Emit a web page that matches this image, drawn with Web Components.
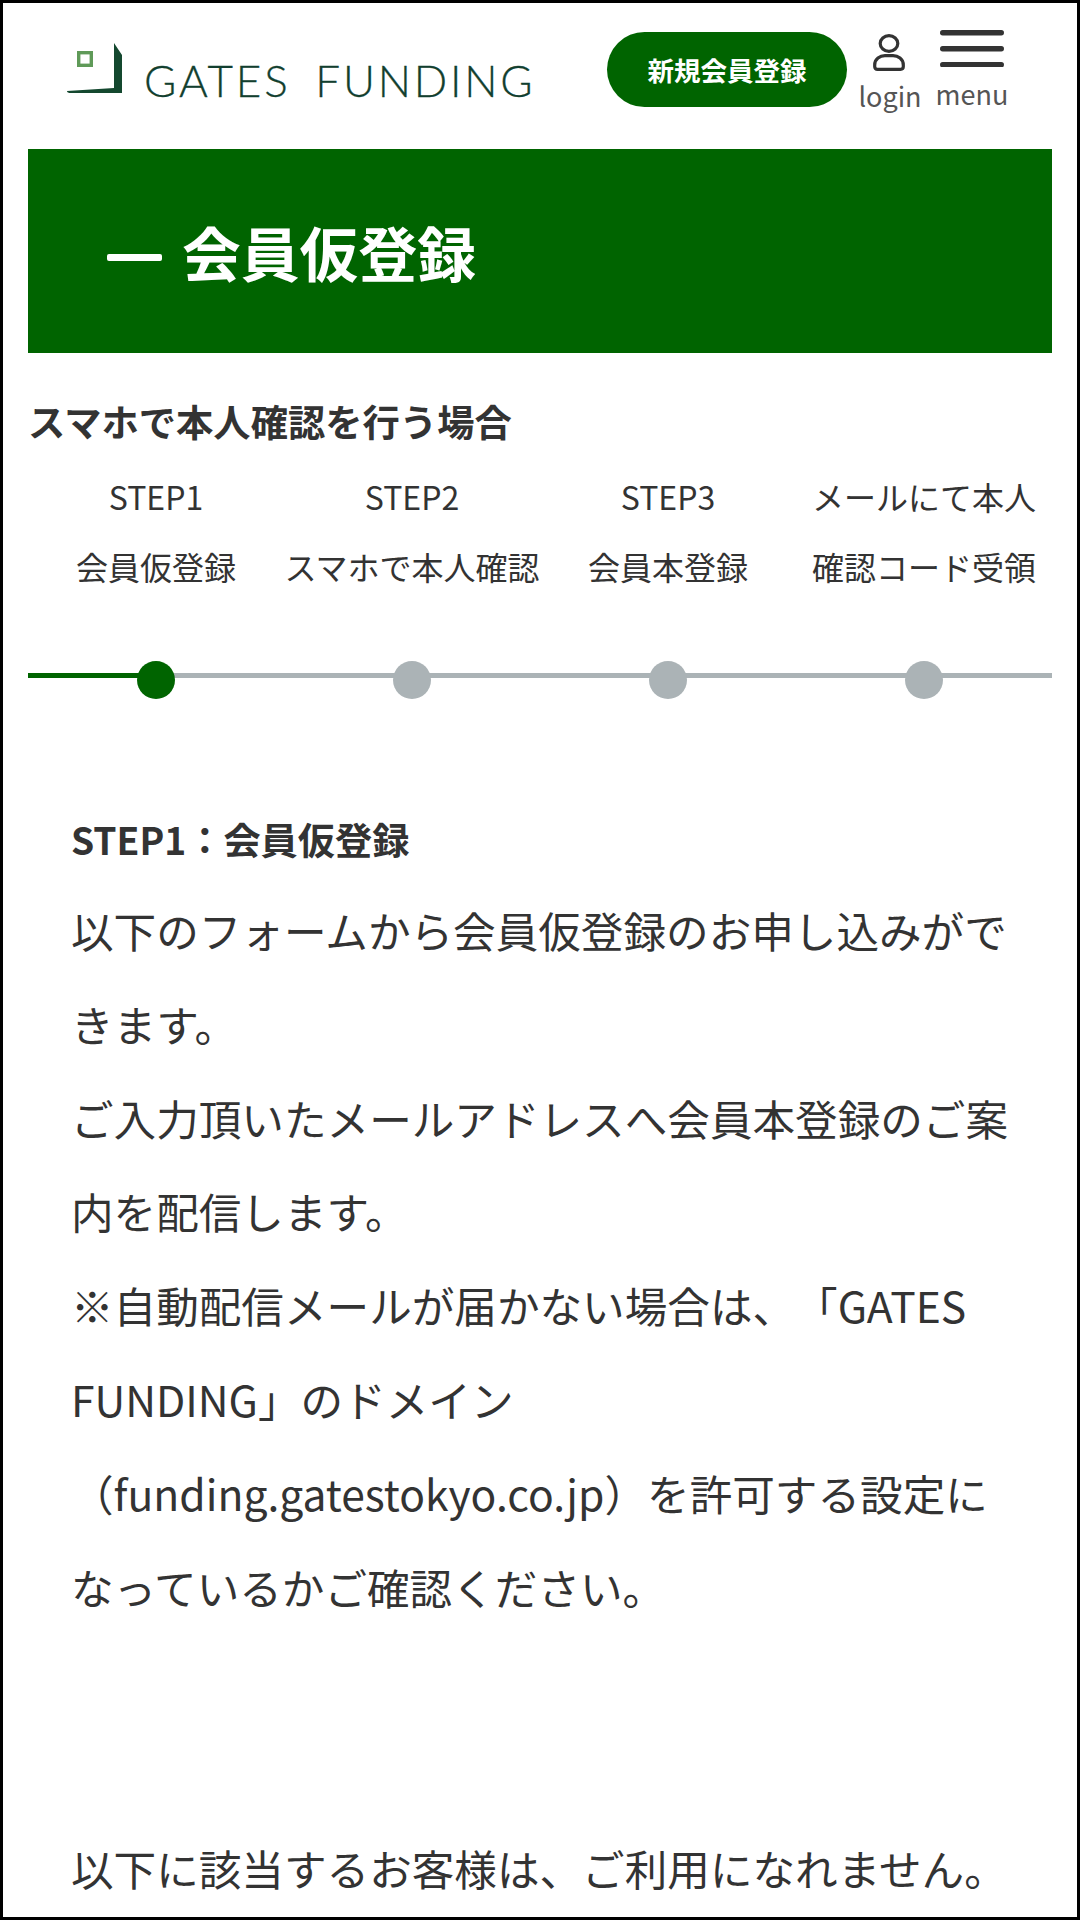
<!DOCTYPE html>
<html lang="ja">
<head>
<meta charset="utf-8">
<title>GATES FUNDING</title>
<style>
    html, body { margin: 0; padding: 0; background: #fff; }
</style>
</head>
<body>
<gf-frame>
    <gf-header></gf-header>
    <gf-title>会員仮登録</gf-title>
    <gf-steps heading="スマホで本人確認を行う場合">
        <gf-step active first="STEP1" second="会員仮登録"></gf-step>
        <gf-step first="STEP2" second="スマホで本人確認"></gf-step>
        <gf-step first="STEP3" second="会員本登録"></gf-step>
        <gf-step first="メールにて本人" second="確認コード受領"></gf-step>
    </gf-steps>
    <gf-notice heading="STEP1：会員仮登録">
        <p>以下のフォームから会員仮登録のお申し込みができます。</p>
        <p>ご入力頂いたメールアドレスへ会員本登録のご案内を配信します。</p>
        <p>※自動配信メールが届かない場合は、「GATES FUNDING」のドメイン<br>（funding.gatestokyo.co.jp）を許可する設定になっているかご確認ください。</p>
        <p class="gap">以下に該当するお客様は、ご利用になれません。</p>
    </gf-notice>
</gf-frame>

<script>
const FONT = `"Noto Sans CJK JP", "Noto Sans", sans-serif`;

/**
 * Outer page box with the black edge of the screenshot.
 */
class GfFrame extends HTMLElement {
    constructor() {
        super();
        this.attachShadow({mode: "open"});
        this.shadowRoot.innerHTML = `
            <style>
                :host {
                    display: block;
                    box-sizing: border-box;
                    width: 1080px;
                    height: 1920px;
                    overflow: hidden;
                    border: 3px solid #000;
                    background: #fff;
                    color: #333;
                    font-family: ${FONT};
                    text-spacing-trim: space-all;
                }
            </style>
            <slot></slot>
        `;
    }
}

/**
 * Top bar: logo, register button, login and menu icons.
 */
class GfHeader extends HTMLElement {
    constructor() {
        super();
        this.attachShadow({mode: "open"});
        this.shadowRoot.innerHTML = `
            <style>
                :host {
                    display: flex;
                    align-items: flex-start;
                    height: 146px;
                }
                .logo {
                    display: flex;
                    align-items: flex-end;
                    width: 604px;
                    padding: 40px 0 0 64px;
                    box-sizing: border-box;
                }
                .logo svg { display: block; flex: none; }
                .logo span {
                    margin: 0 0 -9px 21px;
                    font: 300 44px/1 "Lato", sans-serif;
                    letter-spacing: 2.8px;
                    word-spacing: 10px;
                    color: #123f2f;
                    -webkit-text-stroke: 0.3px #123f2f;
                    white-space: nowrap;
                }
                .register {
                    display: flex;
                    align-items: center;
                    justify-content: center;
                    width: 240px;
                    height: 75px;
                    margin-top: 29px;
                    border-radius: 38px;
                    background: #006400;
                    color: #fff;
                    font-size: 26.5px;
                    font-weight: 700;
                    white-space: nowrap;
                }
                .login, .menu {
                    display: flex;
                    flex-direction: column;
                    align-items: center;
                    color: #555;
                    line-height: 1;
                }
                .login {
                    width: 60px;
                    margin: 30px 0 0 13px;
                    font-size: 27px;
                }
                .menu {
                    width: 70px;
                    margin: 27px 0 0 17px;
                    font-size: 27px;
                }
                .login svg { display: block; margin-bottom: 11px; }
                .menu svg { display: block; margin-bottom: 13px; }
            </style>
            <div class="logo">
                <svg width="56" height="50" viewBox="0 0 56 50">
                    <rect x="11.7" y="9.7" width="12.6" height="12.6" fill="none" stroke="#5f9a58" stroke-width="3.4"/>
                    <path d="M47 0 L55 12 V50 H4 Q0 50 0 48 L47 45 Z" fill="#14482f"/>
                </svg>
                <span>GATES FUNDING</span>
            </div>
            <div class="register">新規会員登録</div>
            <div class="login">
                <svg width="36" height="38" viewBox="0 0 36 38" fill="none" stroke="#333" stroke-width="3.2">
                    <ellipse cx="17" cy="10.5" rx="8.8" ry="7.8"/>
                    <path d="M5.5 36.3 Q2.7 36.3 2.7 33.5 V32 C2.7 26 8 22.7 13 22.7 H21 C26 22.7 31.3 26 31.3 32 V33.5 Q31.3 36.3 28.5 36.3 Z"/>
                </svg>
                login
            </div>
            <div class="menu">
                <svg width="64" height="37" viewBox="0 0 64 37" fill="#333">
                    <rect x="0" y="0" width="64" height="5.4" rx="2.7"/>
                    <rect x="0" y="16" width="64" height="5.4" rx="2.7"/>
                    <rect x="0" y="32" width="64" height="5.4" rx="2.7"/>
                </svg>
                menu
            </div>
        `;
    }
}

/**
 * Green page title band with a leading dash.
 */
class GfTitle extends HTMLElement {
    constructor() {
        super();
        this.attachShadow({mode: "open"});
        this.shadowRoot.innerHTML = `
            <style>
                :host {
                    display: flex;
                    align-items: center;
                    gap: 20px;
                    box-sizing: border-box;
                    height: 204px;
                    margin: 0 25px;
                    padding: 0 0 0 79px;
                    background: #006400;
                    color: #fff;
                    font-size: 58.8px;
                    font-weight: 700;
                }
                .dash { width: 55px; height: 7px; margin-top: 12px; border-radius: 2px; background: #fff; }
            </style>
            <span class="dash"></span><slot></slot>
        `;
    }
}

/**
 * Step indicator; gf-step children sit in four equal columns over the line.
 */
class GfSteps extends HTMLElement {
    constructor() {
        super();
        this.attachShadow({mode: "open"});
        this.shadowRoot.innerHTML = `
            <style>
                :host {
                    display: block;
                    margin: 0 25px;
                }
                h2 {
                    margin: 43px 0 0;
                    font-size: 37.3px;
                    font-weight: 700;
                    line-height: 50px;
                    white-space: nowrap;
                }
                .row {
                    display: grid;
                    grid-template-columns: repeat(4, 256px);
                    margin-top: 15px;
                }
            </style>
            <h2></h2>
            <div class="row"><slot></slot></div>
        `;
        this.shadowRoot.querySelector("h2").textContent = this.getAttribute("heading");
    }
}

class GfStep extends HTMLElement {
    constructor() {
        super();
        this.attachShadow({mode: "open"});
        this.shadowRoot.innerHTML = `
            <style>
                :host {
                    display: block;
                    position: relative;
                    height: 255px;
                    text-align: center;
                    font-size: 32px;
                    line-height: 70px;
                    white-space: nowrap;
                }
                .line {
                    position: absolute;
                    left: 0;
                    right: 0;
                    top: 212px;
                    height: 5px;
                    background: #abb3b6;
                }
                .dot {
                    position: absolute;
                    left: 109px;
                    top: 200px;
                    width: 38px;
                    height: 38px;
                    border-radius: 50%;
                    background: #abb3b6;
                }
                :host([active]) .dot { background: #006400; }
                :host([active]) .line {
                    background: linear-gradient(to right, #006400 50%, #abb3b6 50%);
                }
            </style>
            <div class="first"></div>
            <div class="second"></div>
            <div class="line"></div>
            <div class="dot"></div>
        `;
        this.shadowRoot.querySelector(".first").textContent = this.getAttribute("first");
        this.shadowRoot.querySelector(".second").textContent = this.getAttribute("second");
    }
}

/**
 * Body copy below the steps.
 */
class GfNotice extends HTMLElement {
    constructor() {
        super();
        this.attachShadow({mode: "open"});
        this.shadowRoot.innerHTML = `
            <style>
                :host {
                    display: block;
                    width: 946px;
                    margin: 0 0 0 68px;
                    padding-top: 80px;
                    font-size: 42.6px;
                    line-height: 93.8px;
                }
                h3 {
                    margin: 0;
                    font-size: 37.2px;
                    font-weight: 700;
                    line-height: 87px;
                }
                ::slotted(p) { margin: 0; }
                ::slotted(p.gap) { margin-top: 187.6px; }
            </style>
            <h3></h3>
            <slot></slot>
        `;
        this.shadowRoot.querySelector("h3").textContent = this.getAttribute("heading");
    }
}

customElements.define("gf-frame", GfFrame);
customElements.define("gf-header", GfHeader);
customElements.define("gf-title", GfTitle);
customElements.define("gf-steps", GfSteps);
customElements.define("gf-step", GfStep);
customElements.define("gf-notice", GfNotice);
</script>
</body>
</html>
